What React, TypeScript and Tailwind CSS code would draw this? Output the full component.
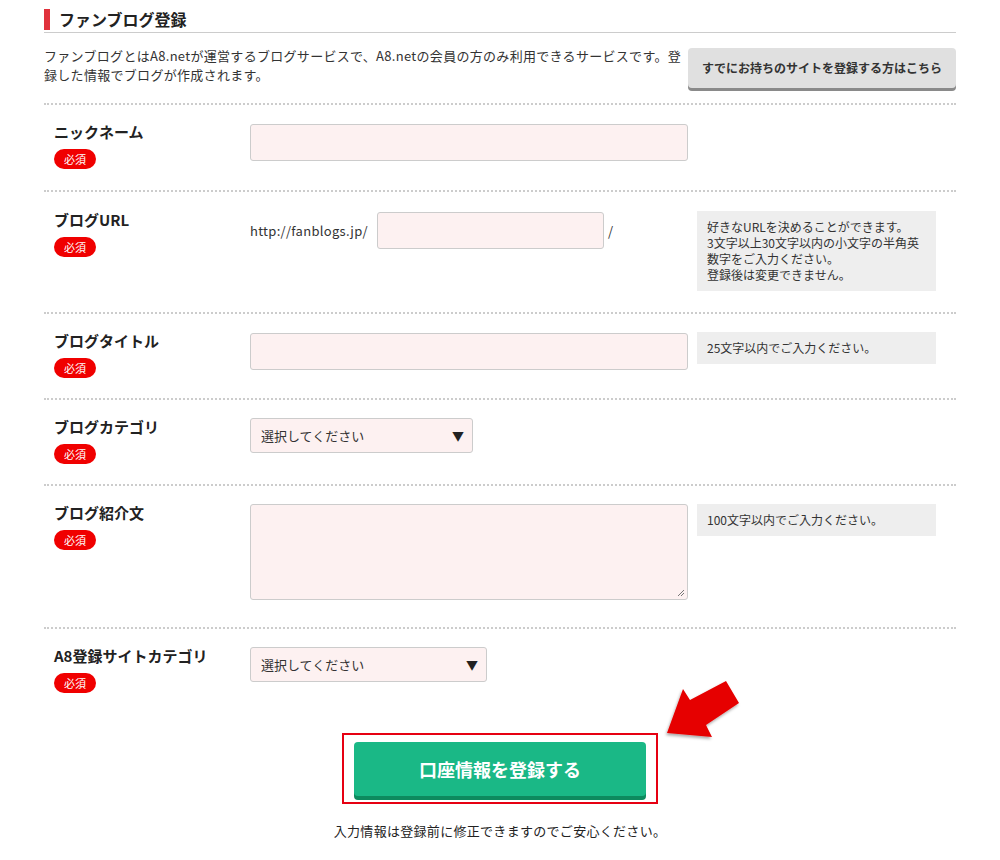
import React from 'react';

const font = { fontFamily: '"Noto Sans CJK JP", "Noto Sans", sans-serif' };

function Badge() {
  return (
    <span className="mt-[8px] inline-flex h-[20px] w-[42px] items-center justify-center rounded-full bg-[#f00000] text-[11px] leading-none text-white">
      必須
    </span>
  );
}

function Note({ children }: { children: React.ReactNode }) {
  return (
    <div className="ml-[9px] w-[239px] bg-[#eeeeee] px-[10px] py-[8px] text-[12px] leading-[16px] text-[#333]">
      {children}
    </div>
  );
}

function Row({
  label,
  children,
  pad = 'pt-[18px] pb-[20px]',
}: {
  label: string;
  children: React.ReactNode;
  pad?: string;
}) {
  return (
    <div className={`flex border-t-2 border-dotted border-[#cccccc] ${pad}`}>
      <div className="flex w-[206px] shrink-0 flex-col items-start pl-[10px]">
        <div className="text-[15px] font-bold leading-[18px] text-[#222]">{label}</div>
        <Badge />
      </div>
      <div className="flex flex-1 items-start">{children}</div>
    </div>
  );
}

function Select({ width }: { width: string }) {
  return (
    <div
      className={`flex h-[35px] items-center justify-between rounded-[3px] border border-[#cccccc] bg-[#fdf1f1] pl-[10px] pr-[8px] text-[13px] text-[#333] ${width}`}
    >
      <span>選択してください</span>
      <span className="text-[12px] text-[#222]">▼</span>
    </div>
  );
}

export default function App() {
  return (
    <div className="relative min-h-[860px] w-full bg-white" style={font}>
      <div className="mx-auto w-[912px] pt-[9px]">
        {/* heading */}
        <div className="flex items-center border-b border-[#cccccc] pb-[2px]">
          <div className="h-[21px] w-[6px] bg-[#e0323c]" />
          <h1 className="ml-[9px] text-[16px] font-bold leading-[21px] text-[#222]">ファンブログ登録</h1>
        </div>

        <div className="flex items-start justify-between pb-[15px] pt-[13px]">
          <p className="w-[640px] text-[13px] leading-[19px] tracking-[0.3px] text-[#333]">
            ファンブログとはA8.netが運営するブログサービスで、A8.netの会員の方のみ利用できるサービスです。登録した情報でブログが作成されます。
          </p>
          <button className="mt-[2px] h-[40px] w-[268px] rounded-[4px] bg-[#e0e0e0] text-[12px] font-bold text-[#333] shadow-[0_3px_0_#8a8a8a]">
            すでにお持ちのサイトを登録する方はこちら
          </button>
        </div>

        <Row label="ニックネーム" pad="pt-[18px] pb-[21px]">
          <div className="mt-[1px] h-[37px] w-[438px] rounded-[3px] border border-[#cccccc] bg-[#fdf1f1]" />
        </Row>

        <Row label="ブログURL" pad="pt-[19px] pb-[21px]">
          <div className="flex items-center pt-[1px]">
            <span className="w-[127px] text-[13px] tracking-[0.3px] text-[#333]">http://fanblogs.jp/</span>
            <div className="h-[37px] w-[227px] rounded-[3px] border border-[#cccccc] bg-[#fdf1f1]" />
            <span className="ml-[4px] w-[80px] text-[13px] text-[#333]">/</span>
          </div>
          <Note>
            好きなURLを決めることができます。
            <br />
            3文字以上30文字以内の小文字の半角英数字をご入力ください。
            <br />
            登録後は変更できません。
          </Note>
        </Row>

        <Row label="ブログタイトル">
          <div className="mt-[1px] h-[37px] w-[438px] rounded-[3px] border border-[#cccccc] bg-[#fdf1f1]" />
          <Note>25文字以内でご入力ください。</Note>
        </Row>

        <Row label="ブログカテゴリ" pad="pt-[18px] pb-[20px]">
          <Select width="w-[223px]" />
        </Row>

        <Row label="ブログ紹介文" pad="pt-[18px] pb-[27px]">
          <div className="relative h-[96px] w-[438px] rounded-[3px] border border-[#cccccc] bg-[#fdf1f1]">
            <svg className="absolute bottom-[2px] right-[2px]" width="8" height="8" viewBox="0 0 8 8">
              <path d="M7 1L1 7M7 4L4 7" stroke="#777" strokeWidth="1" />
            </svg>
          </div>
          <Note>100文字以内でご入力ください。</Note>
        </Row>

        <Row label="A8登録サイトカテゴリ">
          <Select width="w-[237px]" />
        </Row>

        {/* submit */}
        <div className="flex flex-col items-center pt-[20px]">
          <div className="border-2 border-[#e60012] px-[10px] pb-[6px] pt-[7px]">
            <button className="h-[54px] w-[292px] rounded-[4px] bg-[#1ab886] text-[18px] font-bold text-white shadow-[0_4px_0_#0d8a5e]">
              口座情報を登録する
            </button>
          </div>
          <p className="mt-[17px] text-[13px] tracking-[0.3px] text-[#222]">入力情報は登録前に修正できますのでご安心ください。</p>
        </div>
      </div>

      {/* pointer arrow */}
      <svg className="absolute left-[660px] top-[675px]" width="90" height="70" viewBox="0 0 90 70">
        <defs>
          <filter id="sh" x="-20%" y="-20%" width="140%" height="140%">
            <feDropShadow dx="-1" dy="2" stdDeviation="1.5" floodColor="#000" floodOpacity="0.35" />
          </filter>
        </defs>
        <polygon points="7,58 23,14 30,25 66,6 79,28 46,50 52,62" fill="#e60000" filter="url(#sh)" />
      </svg>
    </div>
  );
}
